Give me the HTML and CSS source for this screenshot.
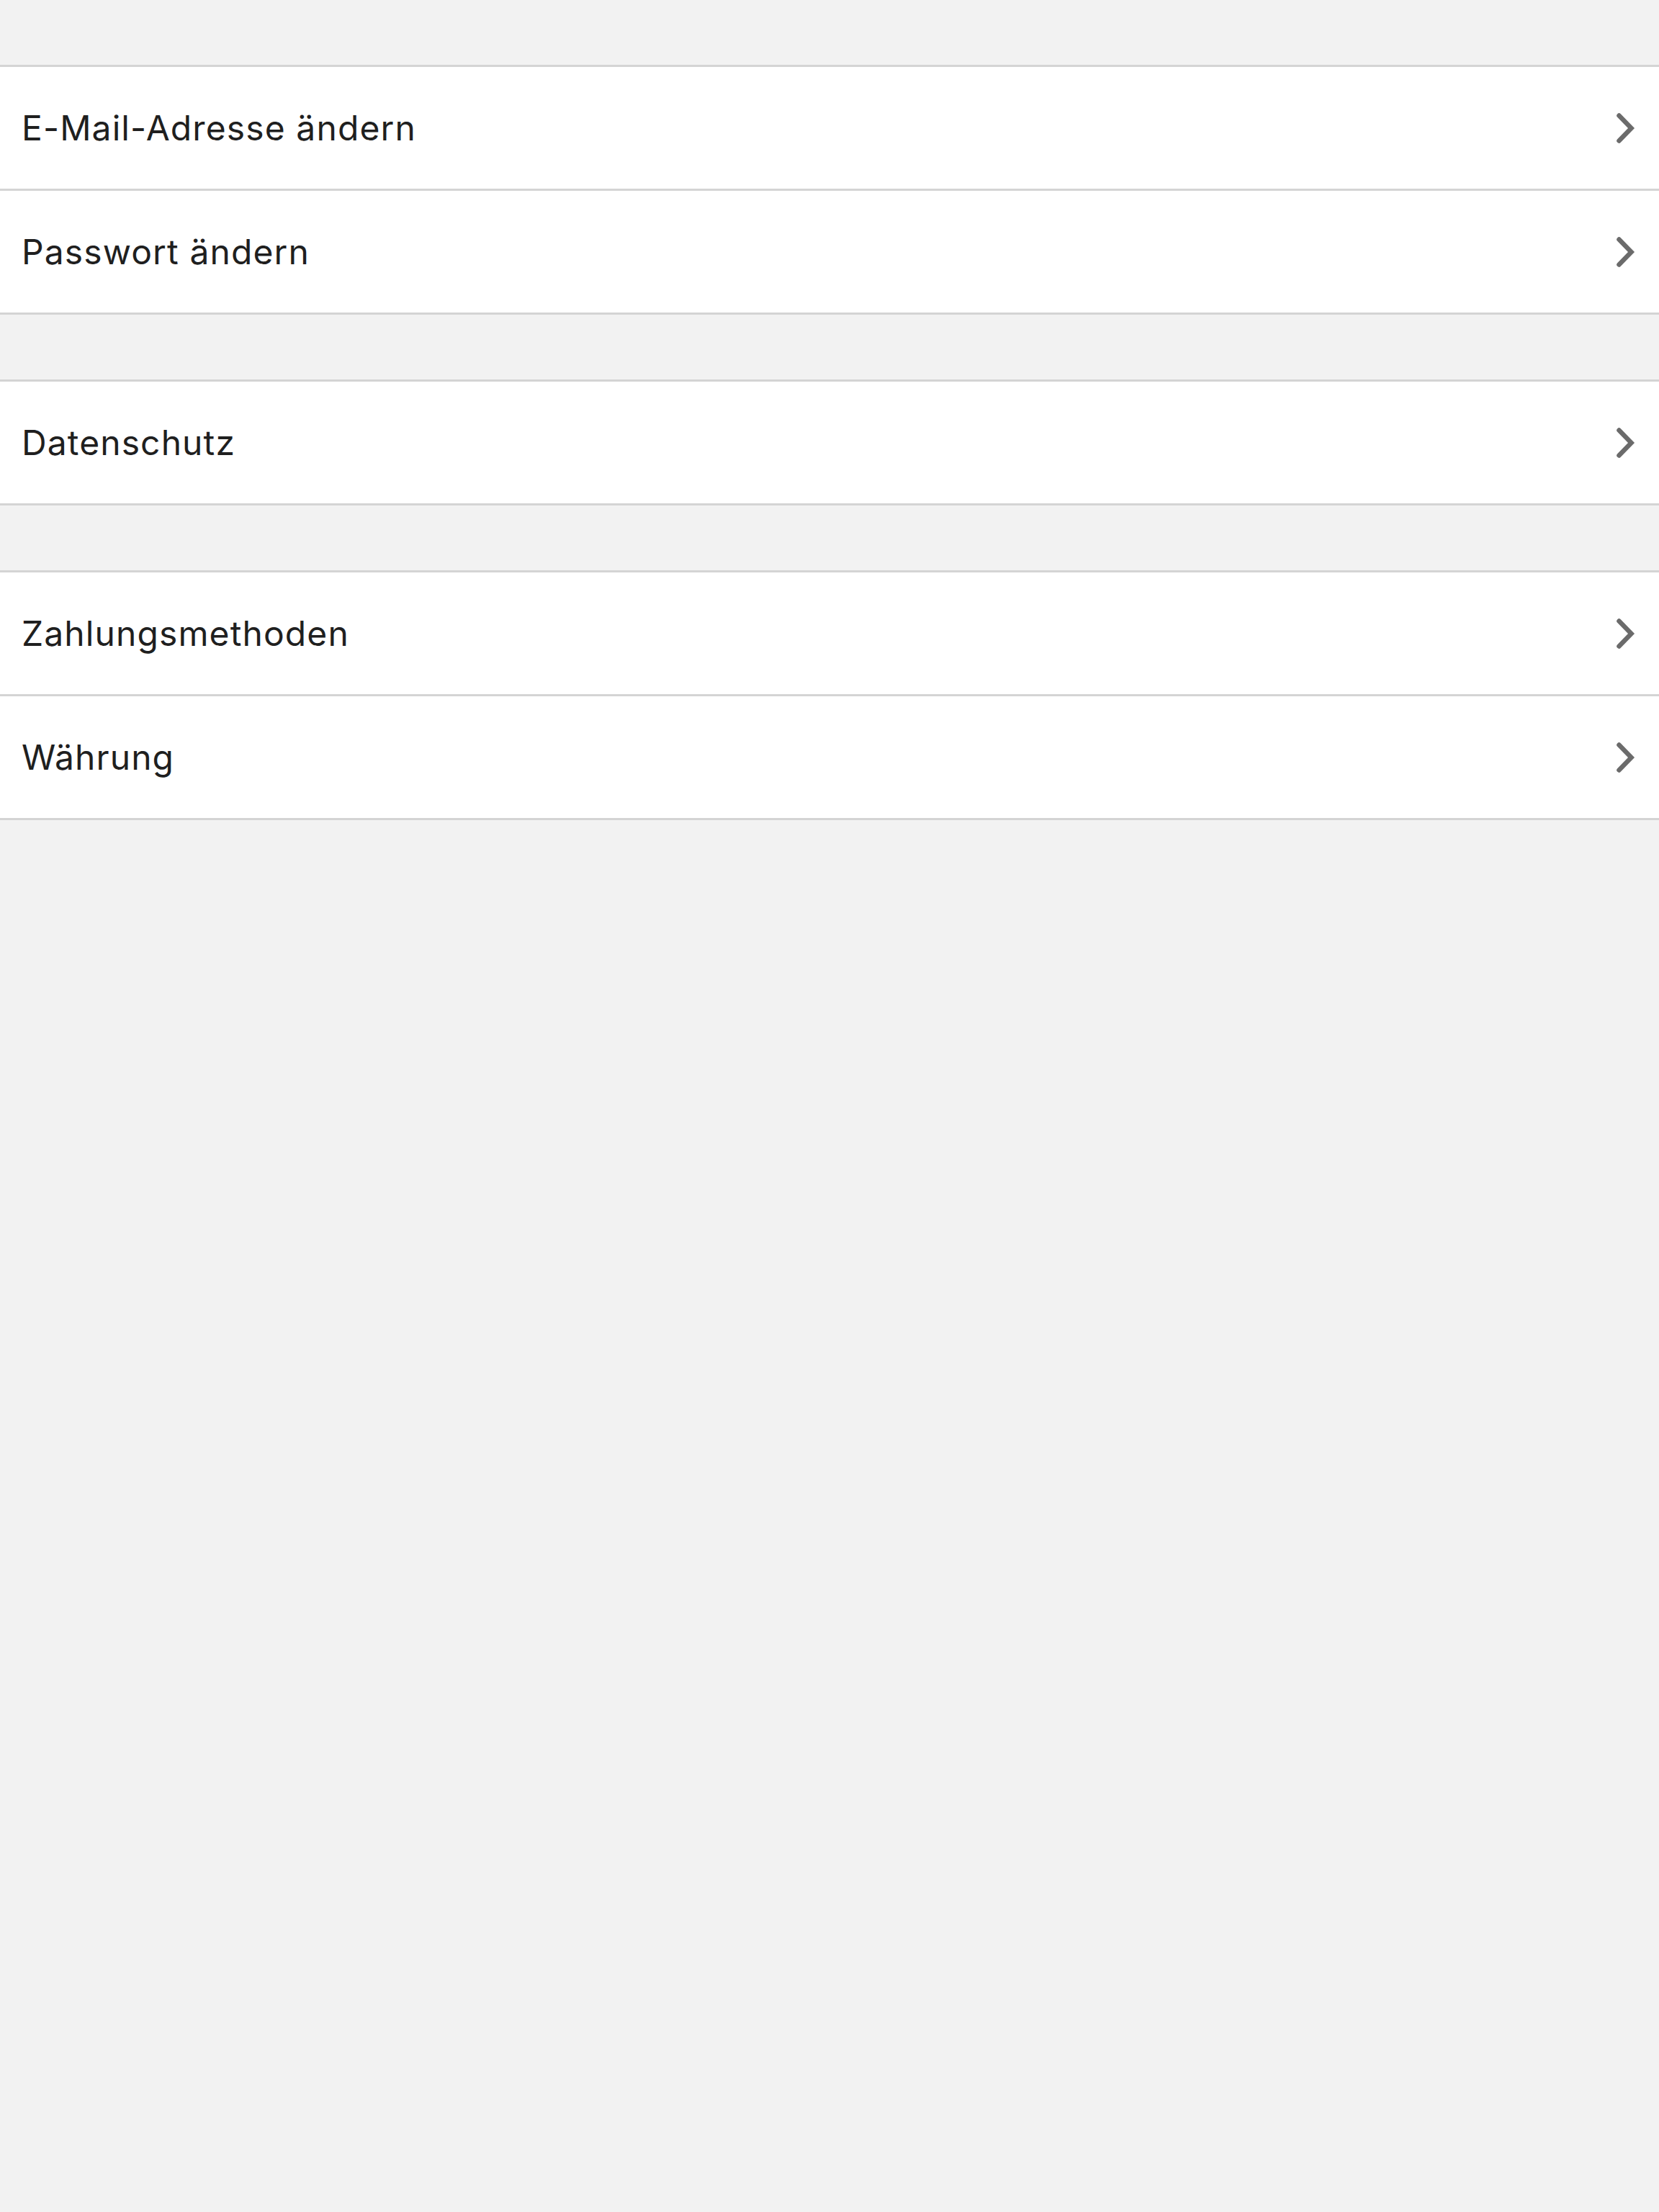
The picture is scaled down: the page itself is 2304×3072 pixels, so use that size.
FILE: index.html
```html
<!DOCTYPE html>
<html lang="de">
<head>
<meta charset="utf-8">
<title>Einstellungen</title>
<link rel="stylesheet" href="styles.css">
</head>
<body>
<main class="settings">
  <section class="group">
    <a class="row" href="#"><span class="label">E-Mail-Adresse ändern</span><svg class="chev" viewBox="0 0 28 42" width="28" height="42"><path d="M4.5 3.5 L21.5 21 L4.5 38.5"/></svg></a>
    <a class="row" href="#"><span class="label">Passwort ändern</span><svg class="chev" viewBox="0 0 28 42" width="28" height="42"><path d="M4.5 3.5 L21.5 21 L4.5 38.5"/></svg></a>
  </section>
  <section class="group">
    <a class="row" href="#"><span class="label">Datenschutz</span><svg class="chev" viewBox="0 0 28 42" width="28" height="42"><path d="M4.5 3.5 L21.5 21 L4.5 38.5"/></svg></a>
  </section>
  <section class="group">
    <a class="row" href="#"><span class="label">Zahlungsmethoden</span><svg class="chev" viewBox="0 0 28 42" width="28" height="42"><path d="M4.5 3.5 L21.5 21 L4.5 38.5"/></svg></a>
    <a class="row" href="#"><span class="label">Währung</span><svg class="chev" viewBox="0 0 28 42" width="28" height="42"><path d="M4.5 3.5 L21.5 21 L4.5 38.5"/></svg></a>
  </section>
</main>
</body>
</html>
```
FILE: styles.css
```css
html, body {
  margin: 0;
  padding: 0;
  background: #f2f2f2;
  font-family: Inter, "Noto Sans", "Liberation Sans", sans-serif;
}

.settings {
  display: flex;
  flex-direction: column;
  gap: 90px;
  padding-top: 90px;
  min-height: 3072px;
  box-sizing: border-box;
}

.group {
  background: #ffffff;
  border-top: 3px solid #d4d4d4;
  display: flex;
  flex-direction: column;
}

.row {
  display: flex;
  align-items: center;
  justify-content: space-between;
  height: 169px;
  padding: 0 32px 0 30px;
  border-bottom: 3px solid #d4d4d4;
  text-decoration: none;
  color: #1f1f1f;
}

.label {
  font-size: 48px;
  font-weight: 400;
  letter-spacing: 1.1px;
}

.chev {
  display: block;
  flex: none;
}

.chev path {
  fill: none;
  stroke: #6b6b6b;
  stroke-width: 6.5;
  stroke-linecap: round;
  stroke-linejoin: miter;
}
```
